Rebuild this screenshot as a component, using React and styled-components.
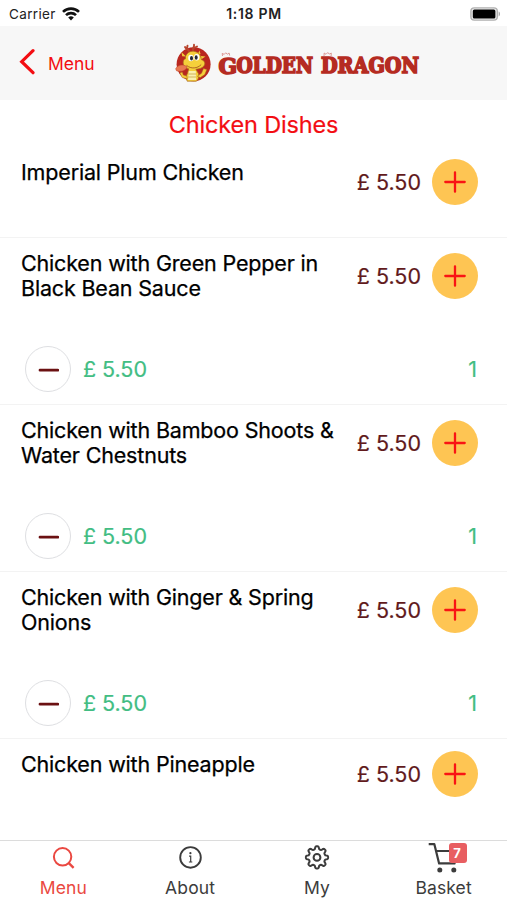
import React from "react";
import styled, { createGlobalStyle } from "styled-components";

const GlobalStyle = createGlobalStyle`
  * {
    box-sizing: border-box;
  }
  body {
    margin: 0;
    background: #fff;
    font-family: Inter, "Liberation Sans", sans-serif;
  }
`;

const Screen = styled.div`
  display: flex;
  flex-direction: column;
  width: 100%;
  height: 900px;
  overflow: hidden;
  background: #fff;
`;

const StatusBar = styled.div`
  display: grid;
  grid-template-columns: 1fr auto 1fr;
  align-items: center;
  flex: none;
  height: 26px;
  padding: 1px 6px 0 9px;
  font-size: 13.5px;
  color: #222;
`;

const Carrier = styled.div`
  display: flex;
  align-items: center;
  gap: 6px;
`;

const CarrierName = styled.span`
  letter-spacing: 0.35px;
`;

const Clock = styled.span`
  padding-right: 2px;
  font-size: 14px;
  font-weight: 600;
  letter-spacing: 0.7px;
`;

const BatteryIcon = styled.svg`
  justify-self: end;
`;

const Header = styled.header`
  display: flex;
  align-items: center;
  flex: none;
  height: 74px;
  padding-left: 19px;
  background: #f7f7f7;
`;

const BackButton = styled.button`
  display: flex;
  align-items: center;
  gap: 12px;
  width: 154px;
  padding: 0;
  border: 0;
  background: none;
  color: #f30d12;
  font: inherit;
  font-size: 17.5px;
  text-align: left;
`;

const BackIcon = styled.svg`
  margin-bottom: 2px;
`;

const BackLabel = styled.span`
  padding-top: 1px;
`;

const LogoImage = styled.svg`
  flex: none;
  overflow: visible;
`;

const Title = styled.h1`
  flex: none;
  height: 47px;
  margin: 0;
  padding-top: 10px;
  font-size: 23.5px;
  font-weight: 400;
  line-height: 30px;
  letter-spacing: -0.17px;
  text-align: center;
  color: #f30d12;
  -webkit-text-stroke: 0.2px #f30d12;
`;

const DishList = styled.main`
  flex: 1;
  overflow: hidden;
`;

const DishRow = styled.section`
  display: flex;
  flex-direction: column;
  justify-content: space-between;
  height: ${({ $ordered }) => ($ordered ? 167 : 91)}px;
  padding: 12px 29px 12px 21px;
  border-bottom: 1px solid ${({ $last }) => ($last ? "transparent" : "#f3f3f3")};
`;

const DishInfo = styled.div`
  display: flex;
  align-items: center;
`;

const DishName = styled.h2`
  align-self: flex-start;
  width: 325px;
  margin: 0;
  padding-top: 1px;
  font-size: 21.5px;
  font-weight: 400;
  line-height: 25.2px;
  letter-spacing: -0.17px;
  white-space: pre-line;
  color: #000;
  -webkit-text-stroke: 0.25px #000;
`;

const Price = styled.span`
  flex: 1;
  padding-right: 11px;
  font-size: 21.5px;
  font-weight: 400;
  text-align: right;
  white-space: nowrap;
  color: #611a1c;
  -webkit-text-stroke: 0.2px #611a1c;
`;

const RoundButton = styled.button`
  display: flex;
  align-items: center;
  justify-content: center;
  flex: none;
  width: 46px;
  height: 46px;
  padding: 0;
  border: ${({ $outlined }) => ($outlined ? "1px solid #dedfe2" : "0")};
  border-radius: 50%;
  background: ${({ $outlined }) => ($outlined ? "#fff" : "#fec553")};
`;

const OrderLine = styled.div`
  display: flex;
  align-items: center;
  padding: 0 1px 0 4px;
  font-size: 21.5px;
  color: #42bd83;
  -webkit-text-stroke: 0.2px #42bd83;
`;

const OrderTotal = styled.span`
  flex: 1;
  padding-left: 12px;
  letter-spacing: -0.05px;
`;

const TabBar = styled.nav`
  display: grid;
  grid-template-columns: repeat(4, 1fr);
  flex: none;
  height: 60px;
  border-top: 1px solid #dcdcdc;
`;

const Tab = styled.a`
  position: relative;
  display: flex;
  flex-direction: column;
  align-items: center;
  padding-top: 1px;
  color: ${({ $active }) => ($active ? "#ea4841" : "#3c3c3c")};
`;

const TabLabel = styled.span`
  font-size: 17.5px;
  font-weight: 400;
  line-height: 25px;
  letter-spacing: ${({ $spacing }) => $spacing || 0}px;
`;

const Badge = styled.span`
  position: absolute;
  top: 2px;
  left: 69px;
  width: 18px;
  height: 20px;
  padding-left: 4px;
  border-radius: 3px;
  background: #e85e61;
  color: #fff;
  font-size: 13px;
  font-weight: 700;
  line-height: 20px;
`;

const dishes = [
  { name: "Imperial Plum Chicken", price: "5.50", count: 0 },
  { name: "Chicken with Green Pepper in\nBlack Bean Sauce", price: "5.50", count: 1 },
  { name: "Chicken with Bamboo Shoots &\nWater Chestnuts", price: "5.50", count: 1 },
  { name: "Chicken with Ginger & Spring\nOnions", price: "5.50", count: 1 },
  { name: "Chicken with Pineapple", price: "5.50", count: 0 },
];

const WifiIcon = () => (
  <svg width="18" height="14" viewBox="0 0 18 14" fill="none" stroke="#111" strokeWidth="2.6">
    <path d="M1 4.9a11.3 11.3 0 0 1 16 0" />
    <path d="M4 8.2a7.1 7.1 0 0 1 10 0" />
    <path d="M6.2 10.6a4 4 0 0 1 5.6 0L9 13.6z" fill="#111" stroke="none" />
  </svg>
);

const Battery = () => (
  <BatteryIcon width="31" height="14" viewBox="0 0 31 14">
    <rect x="0.9" y="0.9" width="26.4" height="12.2" rx="3.4" fill="#eee" stroke="#b0b0b0" strokeWidth="1.4" />
    <rect x="2.8" y="2.6" width="22.6" height="8.8" rx="1.5" fill="#000" />
    <path d="M28.6 4.6c1.9.6 1.9 4.2 0 4.8z" fill="#aaa" />
  </BatteryIcon>
);

const Logo = () => (
  <LogoImage width="270" height="46" viewBox="173 40 270 46">
    <circle cx="193.6" cy="64.2" r="17" fill="#b9271f" />
    <g stroke="#b8452d" strokeWidth="1.9" fill="none" strokeLinecap="round">
      <path d="M189 51c-.8-1.8-3-2-4-4M187 49l.5-3.4M193 50c-.5-2 1.5-3 1-5.2M194 48l3-1.5" />
    </g>
    <path d="M181.5 52l4.5 4.5-3.8-.2zM199.5 50.5l-2.5 5 3.5-1.5zM201 56l4.5.5-4.5 3z" fill="#f0ca39" />
    <path
      d="M185.5 56.5c1.5-4.5 6-6 9.5-5 4 .8 6 4 6.4 8.2 4 1 4.5 5 1.5 7.3-2.6 2-5.5 2-7 2.2l2.6 4.5c.7 3.5-.5 6-2 7.5h-9.3c-1.3-3-1.2-5.4.5-8.4l1-4c-4-1.2-5.8-4-5.5-6.9.2-2 1.4-3 2.3-3.1z"
      fill="#f5cf3b"
      stroke="#a96620"
      strokeWidth="0.7"
    />
    <path d="M179.8 73l2.5-1 1 3 3.5 1 .5 2.8-5-1.2zM206.8 69.6l-2 5-4.5 3-3-1.3 4.2-3 2-4.7z" fill="#f5cf3b" stroke="#a96620" strokeWidth="0.5" />
    <path d="M188.8 71h7l.3 9h-8z" fill="#f9f0b1" />
    <path d="M188.4 74h7.7M188.1 77h8" stroke="#c6a54a" strokeWidth="0.8" />
    <ellipse cx="190.9" cy="58" rx="2.7" ry="3.3" fill="#fff" />
    <ellipse cx="196.7" cy="57.2" rx="2.7" ry="3.3" fill="#fff" />
    <ellipse cx="191.5" cy="58.2" rx="1.5" ry="2.3" fill="#252833" />
    <ellipse cx="196.2" cy="57.5" rx="1.5" ry="2.3" fill="#252833" />
    <path d="M186.5 65.3c4.5 4 11 3.2 14.7-.7" fill="none" stroke="#a85a20" strokeWidth="0.9" />
    <path d="M175.6 68.8c2.2-3.6 6.4-5 11.4-2.2-.5 3.4-4.4 5.2-8.6 4.6l-1.8-.3z" fill="#e97851" stroke="#bd4a2e" strokeWidth="0.5" />
    <path
      d="M222.5 56l-.3-2.6 2 1 1.5-1.6 1.7 1.4 1.7-1.2.6 2.6M324 56l.2-3 1.8 1.3 1.8-1.8 1.5 1.6 2-1-.2 3"
      fill="none"
      stroke="#d98f89"
      strokeWidth="0.9"
    />
    <g
      fill="#b52b22"
      stroke="#b52b22"
      strokeWidth="1.6"
      fontFamily="'DejaVu Serif Condensed', 'DejaVu Serif', serif"
      fontWeight="700"
      fontSize="22"
    >
      <text x="218.4" y="73.6" textLength="18.6" lengthAdjust="spacingAndGlyphs" fontSize="23">G</text>
      <text x="236.4" y="73" textLength="76.6" lengthAdjust="spacingAndGlyphs">OLDEN</text>
      <text x="321" y="73" textLength="98" lengthAdjust="spacingAndGlyphs">DRAGON</text>
    </g>
  </LogoImage>
);

const PlusIcon = () => (
  <svg width="22" height="22" viewBox="0 0 22 22" stroke="#f91414" strokeWidth="2.3" strokeLinecap="round">
    <path d="M11 1.3v19.4M1.3 11h19.4" />
  </svg>
);

const MinusIcon = () => (
  <svg width="22" height="22" viewBox="0 0 22 22" stroke="#6b1112" strokeWidth="2.8" strokeLinecap="round">
    <path d="M3 12.2h17.8" />
  </svg>
);

const SearchIcon = () => (
  <svg width="34" height="33" viewBox="0 0 34 33" fill="none" stroke="currentColor" strokeWidth="2">
    <circle cx="16.6" cy="14.8" r="8.7" />
    <path d="M22.6 20.8l5 5" strokeWidth="2.4" />
  </svg>
);

const InfoIcon = () => (
  <svg width="34" height="33" viewBox="0 0 34 33" fill="none" stroke="currentColor" strokeWidth="1.9">
    <circle cx="17.5" cy="15.4" r="10.3" />
    <path d="M16.1 14.2h1.6v5.8M15.9 20h3.4" strokeWidth="1.2" />
    <circle cx="17.4" cy="11.2" r="1.1" fill="currentColor" stroke="none" />
  </svg>
);

// eight rounded teeth, one every 45 degrees
const gearPoints = Array.from({ length: 144 }, (_, i) => {
  const angle = (i * Math.PI) / 72;
  const radius = 9.7 + 1.45 * Math.tanh(2 * Math.cos(8 * angle));
  return `${(17 + radius * Math.cos(angle)).toFixed(2)},${(15.4 + radius * Math.sin(angle)).toFixed(2)}`;
}).join(" ");

const GearIcon = () => (
  <svg width="34" height="33" viewBox="0 0 34 33" fill="none" stroke="currentColor" strokeWidth="2">
    <polygon points={gearPoints} strokeLinejoin="round" />
    <circle cx="17" cy="15.4" r="3.4" />
  </svg>
);

const CartIcon = () => (
  <svg width="34" height="33" viewBox="0 0 34 33" fill="none" stroke="currentColor" strokeWidth="2.2">
    <path d="M1.7 2.1h5.6l4.8 19.3h15.4l3-12.4H9" strokeLinejoin="round" />
    <circle cx="12.8" cy="28" r="2.5" fill="currentColor" stroke="none" />
    <circle cx="26.8" cy="28" r="2.5" fill="currentColor" stroke="none" />
  </svg>
);

const Dish = ({ name, price, count, last }) => (
  <DishRow $ordered={count > 0} $last={last}>
    <DishInfo>
      <DishName>{name}</DishName>
      <Price>{`£ ${price}`}</Price>
      <RoundButton>
        <PlusIcon />
      </RoundButton>
    </DishInfo>
    {count > 0 && (
      <OrderLine>
        <RoundButton $outlined>
          <MinusIcon />
        </RoundButton>
        <OrderTotal>{`£ ${price}`}</OrderTotal>
        <span>{count}</span>
      </OrderLine>
    )}
  </DishRow>
);

const App = () => {
  return (
    <>
      <GlobalStyle />
      <Screen>
        <StatusBar>
          <Carrier>
            <CarrierName>Carrier</CarrierName>
            <WifiIcon />
          </Carrier>
          <Clock>1:18 PM</Clock>
          <Battery />
        </StatusBar>
        <Header>
          <BackButton>
            <BackIcon width="17" height="26" viewBox="0 0 17 26" fill="none" stroke="#f30d12" strokeWidth="3.2">
              <path d="M14 1.7L2.7 12.7 14 23.7" strokeLinecap="round" />
            </BackIcon>
            <BackLabel>Menu</BackLabel>
          </BackButton>
          <Logo />
        </Header>
        <Title>Chicken Dishes</Title>
        <DishList>
          {dishes.map((dish, index) => (
            <Dish key={dish.name} {...dish} last={index === dishes.length - 1} />
          ))}
        </DishList>
        <TabBar>
          <Tab $active>
            <SearchIcon />
            <TabLabel $spacing={0.1}>Menu</TabLabel>
          </Tab>
          <Tab>
            <InfoIcon />
            <TabLabel $spacing={0.2}>About</TabLabel>
          </Tab>
          <Tab>
            <GearIcon />
            <TabLabel>My</TabLabel>
          </Tab>
          <Tab>
            <CartIcon />
            <Badge>7</Badge>
            <TabLabel $spacing={0.1}>Basket</TabLabel>
          </Tab>
        </TabBar>
      </Screen>
    </>
  );
};

export default App;
